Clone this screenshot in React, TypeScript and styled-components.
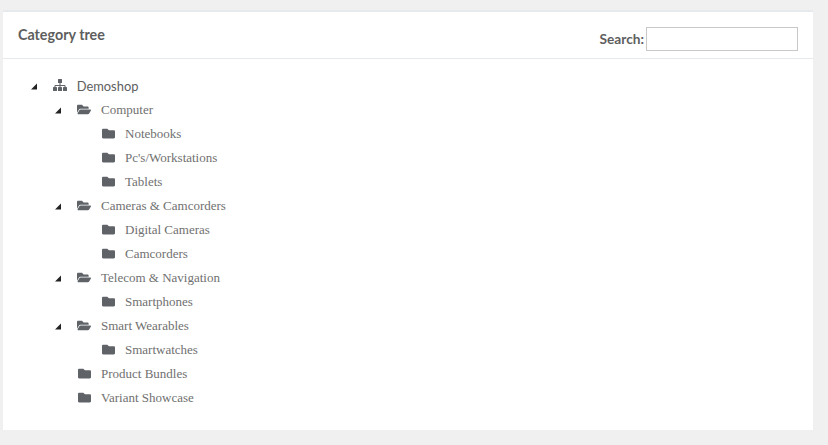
import React from "react";
import styled, { createGlobalStyle } from "styled-components";
import { FaFolder, FaFolderOpen } from "react-icons/fa";

const Global = createGlobalStyle`
  html, body { margin: 0; padding: 0; background: #f0f0f0; }
  body { font-family: Lato, "Liberation Sans", sans-serif; color: #676a6c; }
`;

const Page = styled.div`
  height: 445px;
  padding: 10px 15px 15px 3px;
  box-sizing: border-box;
  overflow: hidden;
`;

const Panel = styled.section`
  height: 420px;
  box-sizing: border-box;
  background: #fff;
  border-top: 2px solid #e7eaec;
`;

const Header = styled.header`
  height: 47px;
  box-sizing: border-box;
  border-bottom: 1px solid #e7eaec;
  padding: 0 15px;
  display: flex;
  justify-content: space-between;
`;

const Title = styled.h5`
  margin: 14px 0 0;
  font-size: 14.3px;
  line-height: 17px;
  font-weight: 700;
  color: #5e5e5e;
`;

const SearchLabel = styled.label`
  display: flex;
  align-items: center;
  gap: 2px;
  height: 24px;
  margin-top: 15px;
  font-size: 13.7px;
  font-weight: 700;
  color: #5e5e5e;
`;

const SearchText = styled.span`
  margin-bottom: 2px;
`;

const SearchInput = styled.input`
  width: 152px;
  height: 24px;
  box-sizing: border-box;
  border: 1px solid #c8c8c8;
  background: #fff;
  padding: 0 4px;
  margin: 0;
  outline: none;
`;

const Tree = styled.ul`
  list-style: none;
  margin: 0;
  padding: 15px 0 0 25px;
`;

const Row = styled.li<{ $level: number }>`
  display: flex;
  align-items: center;
  height: 24px;
  padding-left: ${(p) => p.$level * 24}px;
`;

const Toggle = styled.span<{ $open: boolean }>`
  width: 24px;
  height: 24px;
  flex: none;
  display: flex;
  align-items: center;
  padding-left: 2px;
  box-sizing: border-box;
  svg { display: ${(p) => (p.$open ? "block" : "none")}; }
`;

const IconSlot = styled.span<{ $inset: number }>`
  width: 24px;
  height: 24px;
  flex: none;
  display: flex;
  align-items: center;
  padding-left: ${(p) => p.$inset}px;
  padding-bottom: 2px;
  box-sizing: border-box;
  color: #5f6368;
`;

const Label = styled.span<{ $root: boolean }>`
  font-family: ${(p) => (p.$root ? 'Lato, "Liberation Sans", sans-serif' : '"Liberation Serif", "Times New Roman", serif')};
  font-size: ${(p) => (p.$root ? "12.9px" : "13px")};
  line-height: 24px;
  color: ${(p) => (p.$root ? "#5e5e5e" : "#707070")};
  margin-left: ${(p) => (p.$root ? "0.7px" : "1px")};
`;

type Node = { label: string; level: number; kind: "root" | "open" | "closed"; toggle: boolean };

const nodes: Node[] = [
  { label: "Demoshop", level: 0, kind: "root", toggle: true },
  { label: "Computer", level: 1, kind: "open", toggle: true },
  { label: "Notebooks", level: 2, kind: "closed", toggle: false },
  { label: "Pc's/Workstations", level: 2, kind: "closed", toggle: false },
  { label: "Tablets", level: 2, kind: "closed", toggle: false },
  { label: "Cameras & Camcorders", level: 1, kind: "open", toggle: true },
  { label: "Digital Cameras", level: 2, kind: "closed", toggle: false },
  { label: "Camcorders", level: 2, kind: "closed", toggle: false },
  { label: "Telecom & Navigation", level: 1, kind: "open", toggle: true },
  { label: "Smartphones", level: 2, kind: "closed", toggle: false },
  { label: "Smart Wearables", level: 1, kind: "open", toggle: true },
  { label: "Smartwatches", level: 2, kind: "closed", toggle: false },
  { label: "Product Bundles", level: 1, kind: "closed", toggle: false },
  { label: "Variant Showcase", level: 1, kind: "closed", toggle: false },
];

const Arrow = () => (
  <svg width="7" height="7" viewBox="0 0 7 7">
    <path d="M7 0.5V6.5H1Z" fill="#222" />
  </svg>
);

const Sitemap = () => (
  <svg width="14" height="12" viewBox="0 0 14 12" fill="currentColor">
    <path d="M5 0.5a.5.5 0 0 1 .5-.5h3a.5.5 0 0 1 .5.5v3a.5.5 0 0 1-.5.5H7.500v2h4.200a.8.8 0 0 1 .8.8V8H11.500V7H7.500V8H6.500V7H2.500V8H1.500V6.800a.8.8 0 0 1 .8-.8H6.500V4H5.500a.5.5 0 0 1-.5-.5Z" />
    <rect x="0" y="8" width="4" height="4" rx="0.6" />
    <rect x="5" y="8" width="4" height="4" rx="0.6" />
    <rect x="10" y="8" width="4" height="4" rx="0.6" />
  </svg>
);

const renderIcon = (kind: Node["kind"]) => {
  if (kind === "root") return <Sitemap />;
  if (kind === "open") return <FaFolderOpen style={{ width: 14, height: 13 }} />;
  return <FaFolder style={{ width: 13, height: 13 }} />;
};

const insets = { root: 1, open: 1, closed: 2 };

export default function App() {
  return (
    <Page>
      <Global />
      <Panel>
        <Header>
          <Title>Category tree</Title>
          <SearchLabel>
            <SearchText>Search:</SearchText>
            <SearchInput type="text" />
          </SearchLabel>
        </Header>
        <Tree>
          {nodes.map((n) => (
            <Row key={n.label} $level={n.level}>
              <Toggle $open={n.toggle}>
                <Arrow />
              </Toggle>
              <IconSlot $inset={insets[n.kind]}>{renderIcon(n.kind)}</IconSlot>
              <Label $root={n.kind === "root"}>{n.label}</Label>
            </Row>
          ))}
        </Tree>
      </Panel>
    </Page>
  );
}
